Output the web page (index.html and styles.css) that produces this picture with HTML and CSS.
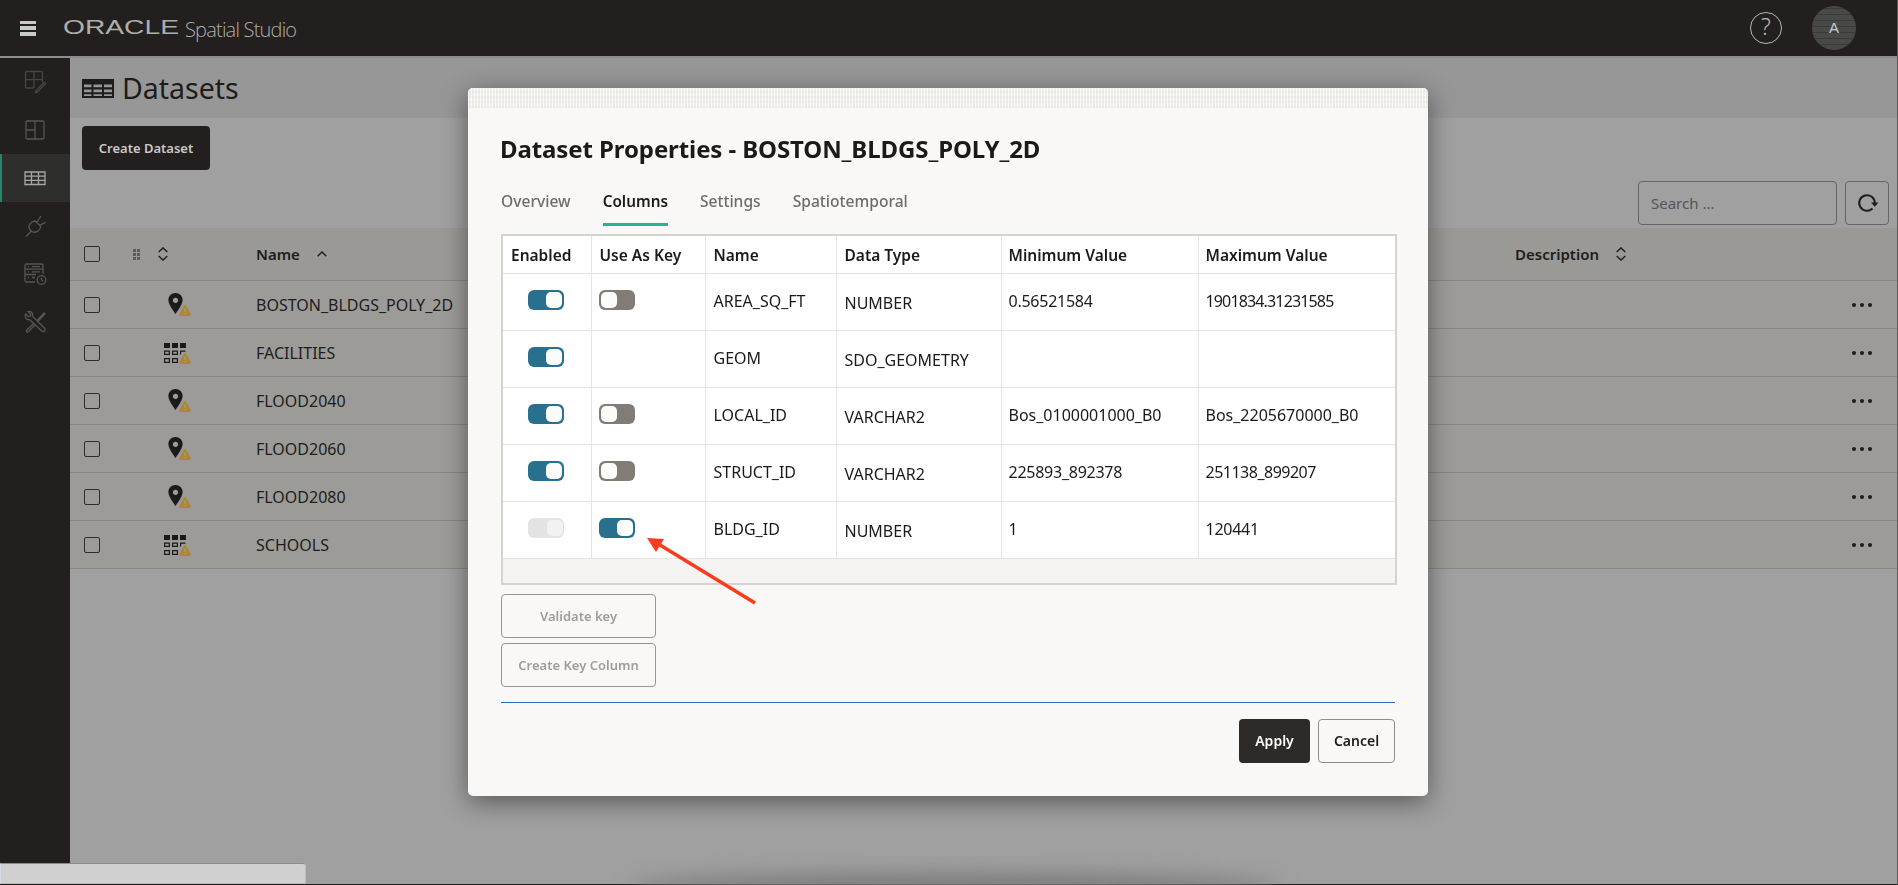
FILE: index.html
```html
<!DOCTYPE html>
<html lang="en">
<head>
    <meta charset="UTF-8">
    <title>Oracle Spatial Studio - Datasets</title>
    <link rel="stylesheet" href="styles.css">
</head>
<body>
    <svg class="defs" width="0" height="0">
        <symbol id="i-pin" viewBox="0 0 15 21">
            <path fill-rule="evenodd" d="M7.5 0C3.4 0 .4 3 .4 7c0 4.600 4.600 9.800 7.100 14 2.500-4.200 7.100-9.400 7.100-14 0-4-3-7-7.100-7zm0 4.700a2.600 2.600 0 1 1 0 5.200 2.600 2.600 0 0 1 0-5.200z"/>
        </symbol>
        <symbol id="i-warn" viewBox="0 0 12 11">
            <path fill="#ad862d" d="M6 0c.4 0 .7.200 1 .7l4.700 8.500c.4.800 0 1.800-1 1.800H1.300c-1 0-1.400-1-1-1.800L5 .7C5.300.2 5.600 0 6 0z"/>
            <path fill="#9c9b98" d="M5.300 3.200h1.400v4H5.300zM5.300 8.100h1.400v1.400H5.300z"/>
        </symbol>
        <symbol id="i-grid" viewBox="0 0 22 20">
            <path d="M0 0h6v5H0zM8 0h6v5H8zM16 0h6v5h-6z"/>
            <path fill="none" stroke="currentColor" stroke-width="1.200" d="M.6 8.100h4.800v3.300H.6zM8.600 8.100h4.800v3.300H8.600zM16.600 11.400V8.100h4.800M.6 15.600h4.800v3.800H.6zM8.600 15.600h4.800v3.800H8.600z"/>
        </symbol>
        <symbol id="i-sort" viewBox="0 0 10 14">
            <path fill="none" stroke="currentColor" stroke-width="1.400" d="M.7 5 5 .9 9.300 5M.7 9 5 13.100 9.300 9"/>
        </symbol>
    </svg>

    <header class="topbar">
        <div class="hamburger"><span></span><span></span><span></span></div>
        <div class="brand">
            <span class="brand-oracle"><span>ORACLE</span></span>
            <span class="brand-name">Spatial Studio</span>
        </div>
        <div class="topbar-right">
            <div class="help">?</div>
            <div class="avatar">A</div>
        </div>
    </header>

    <div class="layout">
        <nav class="sidebar">
            <a class="nav-item faint">
                <svg viewBox="0 0 24 24" width="24" height="24"><path d="M10.500 18H3.700A1.200 1.200 0 0 1 2.500 16.800V2.700A1.200 1.200 0 0 1 3.700 1.500h14.600a1.200 1.200 0 0 1 1.200 1.200V12M11 1.500V18M2.500 9.700h17M14 22.300l-1.600.3.300-1.600 8-8.300c.6-.5 1.300.2 1.300.2s.6.700 0 1.300z"/></svg>
            </a>
            <a class="nav-item">
                <svg viewBox="0 0 24 24" width="24" height="24"><path d="M3.700 3h16.600A1.200 1.200 0 0 1 21 4.200v15.600a1.200 1.200 0 0 1-1.200 1.200H4.200A1.200 1.200 0 0 1 3 19.800V4.200A1.200 1.200 0 0 1 4.200 3zM12 3v18M3 12h9"/></svg>
            </a>
            <a class="nav-item active">
                <svg viewBox="0 0 24 24" width="24" height="24"><path d="M2 6h20v12.500H2zM2 10.200h20M2 14.300h20M8.500 6v12.500M15.500 6v12.500"/></svg>
            </a>
            <a class="nav-item">
                <svg viewBox="0 0 24 24" width="24" height="24"><path d="M3 22.500l5-5M12.300 7l5.500 5.500c-.5 4-4.800 6.500-8 5.500-2.300-.7-4.200-3.500-3.800-6 .3-2.300 3.500-5 6.300-5zM13.800 8.500 18 2M16.500 11.300l6-3"/></svg>
            </a>
            <a class="nav-item">
                <svg viewBox="0 0 24 24" width="24" height="24"><path d="M12 20H3.500A1.500 1.500 0 0 1 2 18.500V3.500A1.500 1.500 0 0 1 3.500 2h15A1.500 1.500 0 0 1 20 3.500V12M2 7.200h18M2 12.500h11M5 4.700h1M9 4.700h8M5 9.800h1M9 9.800h8M5 15.500h1M9 15.500h3M22.800 18a4.300 4.300 0 1 1-8.600 0 4.300 4.300 0 0 1 8.600 0zM18.500 15.700V18l1.700 1.200"/></svg>
            </a>
            <a class="nav-item">
                <svg viewBox="0 0 24 24" width="24" height="24"><path d="M2.500 3.800 5.300 6.500l2-.3.400-2L5 1.600c3-1 5.500 1.800 4.500 4.600L22 18.800c1 1.200-1.500 3.600-2.700 2.600L6.500 9.500C4 10.500.9 7.500 2.500 3.800zM14 10.700l7-7.700.9.900-7.500 8M10.500 13.800l-7 6.500c-.8 1 .7 2.300 1.600 1.500l6.900-6.800"/></svg>
            </a>
        </nav>

        <main class="content">
            <div class="title-band">
                <svg class="title-icon" viewBox="0 0 32 19" width="32" height="19"><path fill-rule="evenodd" d="M0 0h32v19H0zM2 5.500v2.700h7.500V5.500zM11.500 5.500v2.700h8.500V5.500zM22 5.500v2.700h8V5.500zM2 10.500v2.800h7.500v-2.800zM11.500 10.500v2.800h8.500v-2.800zM22 10.500v2.800h8v-2.800zM2 15.300V17h7.500v-1.700zM11.500 15.300V17h8.500v-1.700zM22 15.300V17h8v-1.700z"/></svg>
                <h1>Datasets</h1>
            </div>

            <div class="toolbar">
                <button class="btn-create">Create Dataset</button>
                <div class="search-row">
                    <div class="search">Search ...</div>
                    <button class="btn-refresh">
                        <svg viewBox="0 0 22 22" width="22" height="22"><path fill="none" stroke="#1e1d1c" stroke-width="2" d="M16.500 16.500A7.800 7.800 0 1 1 18.800 11"/><path fill="#1e1d1c" d="M15 10.500h7.500L18.800 14.700z"/></svg>
                    </button>
                </div>
            </div>

            <div class="list">
                <div class="list-row list-head">
                    <span class="check"></span>
                    <span class="cell-icon">
                        <svg class="drag" viewBox="0 0 7 11" width="7" height="11"><path d="M0 0h3v3H0zM4 0h3v3H4zM0 4h3v3H0zM4 4h3v3H4zM0 8h3v3H0zM4 8h3v3H4z"/></svg>
                        <svg class="sort" width="10" height="14"><use href="#i-sort"/></svg>
                    </span>
                    <span class="cell-name">Name
                        <svg class="caret" viewBox="0 0 10 6" width="10" height="6"><path fill="none" stroke="currentColor" stroke-width="1.400" d="M.7 5.300 5 1l4.300 4.300"/></svg>
                    </span>
                    <span class="cell-desc">Description
                        <svg class="sort" width="10" height="14"><use href="#i-sort"/></svg>
                    </span>
                </div>
                <div class="list-row">
                    <span class="check"></span>
                    <span class="cell-icon"><span class="type-icon"><svg class="pin" width="15" height="21"><use href="#i-pin"/></svg><svg class="warn" width="12" height="11"><use href="#i-warn"/></svg></span></span>
                    <span class="cell-name">BOSTON_BLDGS_POLY_2D</span>
                    <span class="dots"><i></i><i></i><i></i></span>
                </div>
                <div class="list-row">
                    <span class="check"></span>
                    <span class="cell-icon"><span class="type-icon"><svg class="grid" width="22" height="20"><use href="#i-grid"/></svg><svg class="warn" width="12" height="11"><use href="#i-warn"/></svg></span></span>
                    <span class="cell-name">FACILITIES</span>
                    <span class="dots"><i></i><i></i><i></i></span>
                </div>
                <div class="list-row">
                    <span class="check"></span>
                    <span class="cell-icon"><span class="type-icon"><svg class="pin" width="15" height="21"><use href="#i-pin"/></svg><svg class="warn" width="12" height="11"><use href="#i-warn"/></svg></span></span>
                    <span class="cell-name">FLOOD2040</span>
                    <span class="dots"><i></i><i></i><i></i></span>
                </div>
                <div class="list-row">
                    <span class="check"></span>
                    <span class="cell-icon"><span class="type-icon"><svg class="pin" width="15" height="21"><use href="#i-pin"/></svg><svg class="warn" width="12" height="11"><use href="#i-warn"/></svg></span></span>
                    <span class="cell-name">FLOOD2060</span>
                    <span class="dots"><i></i><i></i><i></i></span>
                </div>
                <div class="list-row">
                    <span class="check"></span>
                    <span class="cell-icon"><span class="type-icon"><svg class="pin" width="15" height="21"><use href="#i-pin"/></svg><svg class="warn" width="12" height="11"><use href="#i-warn"/></svg></span></span>
                    <span class="cell-name">FLOOD2080</span>
                    <span class="dots"><i></i><i></i><i></i></span>
                </div>
                <div class="list-row">
                    <span class="check"></span>
                    <span class="cell-icon"><span class="type-icon"><svg class="grid" width="22" height="20"><use href="#i-grid"/></svg><svg class="warn" width="12" height="11"><use href="#i-warn"/></svg></span></span>
                    <span class="cell-name">SCHOOLS</span>
                    <span class="dots"><i></i><i></i><i></i></span>
                </div>
            </div>
        </main>
    </div>

    <!-- leftover scrollbar and shadow at the bottom of the window -->
    <div class="bottom-shadow"></div>
    <div class="scrollbar"></div>

    <div class="backdrop">
        <div class="modal">
            <div class="modal-stripe"></div>
            <div class="modal-body">
                <h2>Dataset Properties - BOSTON_BLDGS_POLY_2D</h2>
                <div class="tabs">
                    <span class="tab">Overview</span>
                    <span class="tab active">Columns</span>
                    <span class="tab">Settings</span>
                    <span class="tab">Spatiotemporal</span>
                </div>

                <div class="columns-box">
                    <table class="columns">
                        <colgroup>
                            <col class="c1"><col class="c2"><col class="c3"><col class="c4"><col class="c5"><col class="c6">
                        </colgroup>
                        <thead>
                            <tr>
                                <th>Enabled</th><th>Use As Key</th><th>Name</th><th>Data Type</th><th>Minimum Value</th><th>Maximum Value</th>
                            </tr>
                        </thead>
                        <tbody>
                            <tr>
                                <td class="center"><span class="toggle on"></span></td>
                                <td><span class="toggle off"></span></td>
                                <td>AREA_SQ_FT</td>
                                <td class="type">NUMBER</td>
                                <td class="tight-s">0.56521584</td>
                                <td class="tight-l">1901834.31231585</td>
                            </tr>
                            <tr>
                                <td class="center"><span class="toggle on"></span></td>
                                <td></td>
                                <td>GEOM</td>
                                <td class="type">SDO_GEOMETRY</td>
                                <td></td>
                                <td></td>
                            </tr>
                            <tr>
                                <td class="center"><span class="toggle on"></span></td>
                                <td><span class="toggle off"></span></td>
                                <td>LOCAL_ID</td>
                                <td class="type">VARCHAR2</td>
                                <td>Bos_0100001000_B0</td>
                                <td>Bos_2205670000_B0</td>
                            </tr>
                            <tr>
                                <td class="center"><span class="toggle on"></span></td>
                                <td><span class="toggle off"></span></td>
                                <td>STRUCT_ID</td>
                                <td class="type">VARCHAR2</td>
                                <td class="tight-s">225893_892378</td>
                                <td class="tight-m">251138_899207</td>
                            </tr>
                            <tr>
                                <td class="center"><span class="toggle disabled"></span></td>
                                <td><span class="toggle on"></span></td>
                                <td>BLDG_ID</td>
                                <td class="type">NUMBER</td>
                                <td>1</td>
                                <td class="tight-s">120441</td>
                            </tr>
                        </tbody>
                    </table>
                </div>

                <div class="key-actions">
                    <button class="btn-key">Validate key</button>
                    <button class="btn-key">Create Key Column</button>
                </div>

                <div class="modal-footer">
                    <button class="btn-apply">Apply</button>
                    <button class="btn-cancel">Cancel</button>
                </div>
            </div>
        </div>
    </div>

    <!-- red callout arrow pointing at the BLDG_ID key toggle -->
    <svg class="callout" viewBox="0 0 120 76" width="120" height="76">
        <path d="M111 66 16 8" fill="none" stroke="#fb3a1e" stroke-width="3.500"/>
        <path d="M3 1 20 2 12 15z" fill="#fb3a1e"/>
    </svg>
</body>
</html>
```

FILE: styles.css
```css
/* Basic reset */
* {
    box-sizing: border-box;
}

html, body {
    height: 100%;
}

body {
    margin: 0;
    overflow: hidden;
    background-color: #a0a0a0;
    font-family: "Noto Sans", "Open Sans", sans-serif;
    font-size: 15px;
    color: #1e1d1c;
    border-bottom: 1px solid #1a1a1a;
    border-right: 1px solid #5c5c5c;
}

.defs {
    position: absolute;
}

/* Top bar */
.topbar {
    height: 58px;
    display: flex;
    align-items: center;
    padding-left: 20px;
    background-color: #231f1e;
    border-bottom: 2px solid #8d8d8d;
}

.hamburger {
    width: 16px;
    height: 15px;
    display: flex;
    flex-direction: column;
    justify-content: space-between;
}

.hamburger span {
    height: 3.5px;
    background-color: #c9c9c7;
}

.brand {
    display: flex;
    align-items: center;
    margin-left: 27px;
    height: 100%;
}

.brand-oracle {
    width: 122px;
    font-family: "Liberation Sans", sans-serif;
    font-size: 20px;
    line-height: 20px;
    color: #aeaeaa;
    margin-top: -2px;
}

.brand-oracle span {
    display: inline-block;
    transform: scaleX(1.41);
    transform-origin: left center;
}

.brand-name {
    font-family: "Open Sans", sans-serif;
    font-weight: 300;
    font-size: 20px;
    letter-spacing: -0.8px;
    color: #aeaeaa;
    margin-top: 2px;
}

.topbar-right {
    margin-left: auto;
    display: flex;
    align-items: center;
    gap: 30px;
    padding-right: 41px;
}

.help {
    width: 32px;
    height: 32px;
    border: 1.500px solid #b8b8b6;
    border-radius: 50%;
    text-align: center;
    line-height: 27px;
    font-size: 23px;
    font-weight: 300;
    color: #b8b8b6;
}

.avatar {
    width: 44px;
    height: 44px;
    border-radius: 50%;
    text-align: center;
    line-height: 44px;
    font-family: "Liberation Sans", sans-serif;
    font-size: 15px;
    color: #c8c8c8;
    background-color: #494948;
    background-image: repeating-linear-gradient(0deg, transparent 0, transparent 5px, #3b3b3a 5px, #3b3b3a 6px);
}

/* Sidebar and content */
.layout {
    display: flex;
    height: calc(100% - 58px);
}

.sidebar {
    width: 70px;
    flex-shrink: 0;
    background-color: #231f1e;
}

.nav-item {
    height: 48px;
    display: flex;
    align-items: center;
    justify-content: center;
}

.nav-item svg {
    fill: none;
    stroke: #585553;
    stroke-width: 1.300;
}

.nav-item.faint svg {
    stroke: #474442;
}

.nav-item.active {
    background-color: #2e2e2c;
    border-left: 2px solid #27866f;
    padding-right: 2px;
}

.nav-item.active svg {
    stroke: #a6a6a4;
}

.content {
    flex: 1;
    min-width: 0;
}

.title-band {
    height: 60px;
    display: flex;
    align-items: center;
    padding-left: 12px;
    background-color: #979797;
}

.title-icon {
    fill: #1e1d1c;
}

h1 {
    margin: 0 0 0 8px;
    font-size: 28.500px;
    font-weight: 400;
    line-height: 40px;
}

.toolbar {
    height: 110px;
    padding: 8px 8px 0 12px;
    display: flex;
    justify-content: space-between;
}

.btn-create {
    width: 128px;
    height: 44px;
    border: none;
    border-radius: 4px;
    background-color: #231f1e;
    color: #c9c9c7;
    font-family: inherit;
    font-size: 13px;
    font-weight: 600;
}

.search-row {
    display: flex;
    gap: 8px;
    margin-top: 55px;
}

.search {
    width: 199px;
    height: 44px;
    padding-left: 12px;
    border: 1px solid #676665;
    border-radius: 4px;
    color: #555;
    line-height: 42px;
}

.btn-refresh {
    width: 44px;
    height: 44px;
    padding: 0;
    border: 1px solid #676665;
    border-radius: 4px;
    background: none;
    display: flex;
    align-items: center;
    justify-content: center;
}

/* Dataset list */
.list-row {
    height: 48px;
    display: flex;
    align-items: center;
    padding-left: 14px;
    padding-right: 25px;
    background-color: #9c9b98;
    border-bottom: 1px solid #888785;
    font-size: 16px;
}

.list-head {
    height: 53px;
    background-color: #9a9996;
    font-size: 15px;
    font-weight: 600;
}

.check {
    width: 16px;
    height: 16px;
    flex-shrink: 0;
    border: 1.500px solid #2e2d2c;
    border-radius: 2px;
}

.cell-icon {
    width: 156px;
    display: flex;
    align-items: center;
    flex-shrink: 0;
}

.drag {
    margin-left: 33px;
    fill: #5d5c5a;
}

.sort {
    color: #1e1d1c;
    margin-left: 18px;
}

.cell-name {
    flex: 1;
    display: flex;
    align-items: center;
}

.caret {
    margin-left: 17px;
}

.cell-desc {
    display: flex;
    align-items: center;
    margin-right: 246px;
}

.cell-desc .sort {
    margin-left: 17px;
}

.type-icon {
    position: relative;
    display: block;
    width: 28px;
    height: 24px;
    margin-left: 64px;
    color: #1b1a19;
    fill: #1b1a19;
}

.type-icon svg {
    position: absolute;
}

.type-icon .pin {
    left: 4px;
    top: 0;
}

.type-icon .grid {
    left: 0;
    top: 2px;
}

.type-icon .warn {
    left: 15px;
    top: 12px;
}

.dots {
    display: flex;
    gap: 4px;
    width: 20px;
}

.dots i {
    width: 4px;
    height: 4px;
    border-radius: 50%;
    background-color: #1e1d1c;
}

.scrollbar {
    position: fixed;
    left: 0;
    bottom: 1px;
    width: 306px;
    height: 21px;
    background-color: #d0d0d0;
    border: 1px solid #bcbcbc;
    border-top-color: #8c8c8c;
    border-left-color: #d8dce8;
    border-radius: 0 3px 0 0;
}

.bottom-shadow {
    position: fixed;
    left: 630px;
    bottom: -16px;
    width: 650px;
    height: 28px;
    border-radius: 50%;
    background-color: #7c7c7c;
    filter: blur(10px);
}

/* Dialog */
.backdrop {
    position: fixed;
    inset: 0;
    display: flex;
    align-items: center;
    justify-content: center;
}

.modal {
    width: 960px;
    height: 708px;
    margin: 0 2px 2px 0;
    background-color: #f9f8f6;
    border-radius: 5px;
    overflow: hidden;
    box-shadow: 0 6px 26px rgba(0, 0, 0, 0.45);
}

.modal-stripe {
    height: 20px;
    background-color: #efeeeb;
    background-image:
        repeating-linear-gradient(90deg, rgba(255, 255, 255, 0.7) 0, rgba(255, 255, 255, 0.7) 1px, transparent 1px, transparent 3px),
        repeating-linear-gradient(0deg, rgba(0, 0, 0, 0.03) 0, rgba(0, 0, 0, 0.03) 2px, transparent 2px, transparent 5px);
}

.modal-body {
    padding: 26px 33px 0;
}

h2 {
    margin: 0 0 0 -1px;
    font-size: 24px;
    font-weight: 700;
    line-height: 30px;
    letter-spacing: -0.1px;
    color: #1b1a19;
}

.tabs {
    display: flex;
    gap: 32px;
    margin-top: 22px;
}

.tab {
    padding: 5px 0 12px;
    line-height: 20px;
    font-size: 15.600px;
    font-weight: 500;
    color: #6d6c6a;
    border-bottom: 3px solid transparent;
}

.tab.active {
    color: #1b1a19;
    font-size: 15.300px;
    font-weight: 600;
    border-bottom-color: #2bb296;
}

.columns-box {
    width: 896px;
    height: 351px;
    margin-top: 8px;
    border: 2px solid #d3d3d1;
    background-color: #f5f4f2;
}

.columns {
    width: 892px;
    table-layout: fixed;
    border-collapse: collapse;
    background-color: #fff;
}

.c1 { width: 88px; }
.c2 { width: 114px; }
.c3 { width: 131px; }
.c4 { width: 165px; }
.c5 { width: 197px; }
.c6 { width: 197px; }

.columns th,
.columns td {
    padding: 0 8px;
    border: 1px solid #e5e5e3;
    text-align: left;
    white-space: nowrap;
    color: #1b1a19;
}

.columns tr > :first-child {
    border-left: none;
}

.columns tr > :last-child {
    border-right: none;
}

.columns tr > :nth-child(n+5) {
    padding-left: 7px;
}

.columns thead th {
    border-top: none;
    height: 38px;
    padding-top: 1px;
    font-size: 15.500px;
    font-weight: 600;
}

.columns td {
    height: 57px;
    padding-bottom: 2px;
    font-size: 16px;
}

.columns td.center {
    text-align: center;
}

.columns td.type {
    padding-top: 2px;
    padding-bottom: 0;
}

/* digits are narrower in the original font */
.columns td.tight-s {
    letter-spacing: -0.25px;
}

.columns td.tight-m {
    letter-spacing: -0.5px;
}

.columns td.tight-l {
    letter-spacing: -0.85px;
}

.toggle {
    display: inline-block;
    vertical-align: middle;
    position: relative;
    width: 36px;
    height: 20px;
    border-radius: 6px;
    margin: -5px 0 0 -1px;
}

.toggle::after {
    content: "";
    position: absolute;
    top: 2px;
    width: 16px;
    height: 16px;
    border-radius: 5px;
    background-color: #fbfbfa;
}

.toggle.on {
    background-color: #29708f;
}

.toggle.on::after {
    right: 2px;
}

.toggle.off {
    background-color: #817c75;
}

.toggle.off::after {
    left: 2px;
}

.toggle.disabled {
    background-color: #e3e3e3;
}

.toggle.disabled::after {
    right: 1px;
    background-color: #f2f2f2;
}

.key-actions {
    display: flex;
    flex-direction: column;
    align-items: flex-start;
    gap: 5px;
    margin-top: 9px;
}

.btn-key {
    width: 155px;
    height: 44px;
    padding-top: 2px;
    border: 1px solid #959593;
    border-radius: 4px;
    background: none;
    font-family: inherit;
    font-size: 13px;
    font-weight: 600;
    color: #9d9d9b;
}

.modal-footer {
    display: flex;
    justify-content: flex-end;
    gap: 8px;
    margin-top: 15px;
    padding-top: 16px;
    border-top: 1px solid #2a6bc4;
}

.btn-apply,
.btn-cancel {
    height: 44px;
    border-radius: 4px;
    font-family: inherit;
    font-size: 14px;
    font-weight: 600;
}

.btn-apply {
    width: 71px;
    border: none;
    background-color: #2d2a27;
    color: #fff;
}

.btn-cancel {
    width: 77px;
    border: 1px solid #8e8e8c;
    background: none;
    color: #1e1d1c;
}

/* Arrow annotation on top of the dialog */
.callout {
    position: fixed;
    left: 644px;
    top: 537px;
}
```
